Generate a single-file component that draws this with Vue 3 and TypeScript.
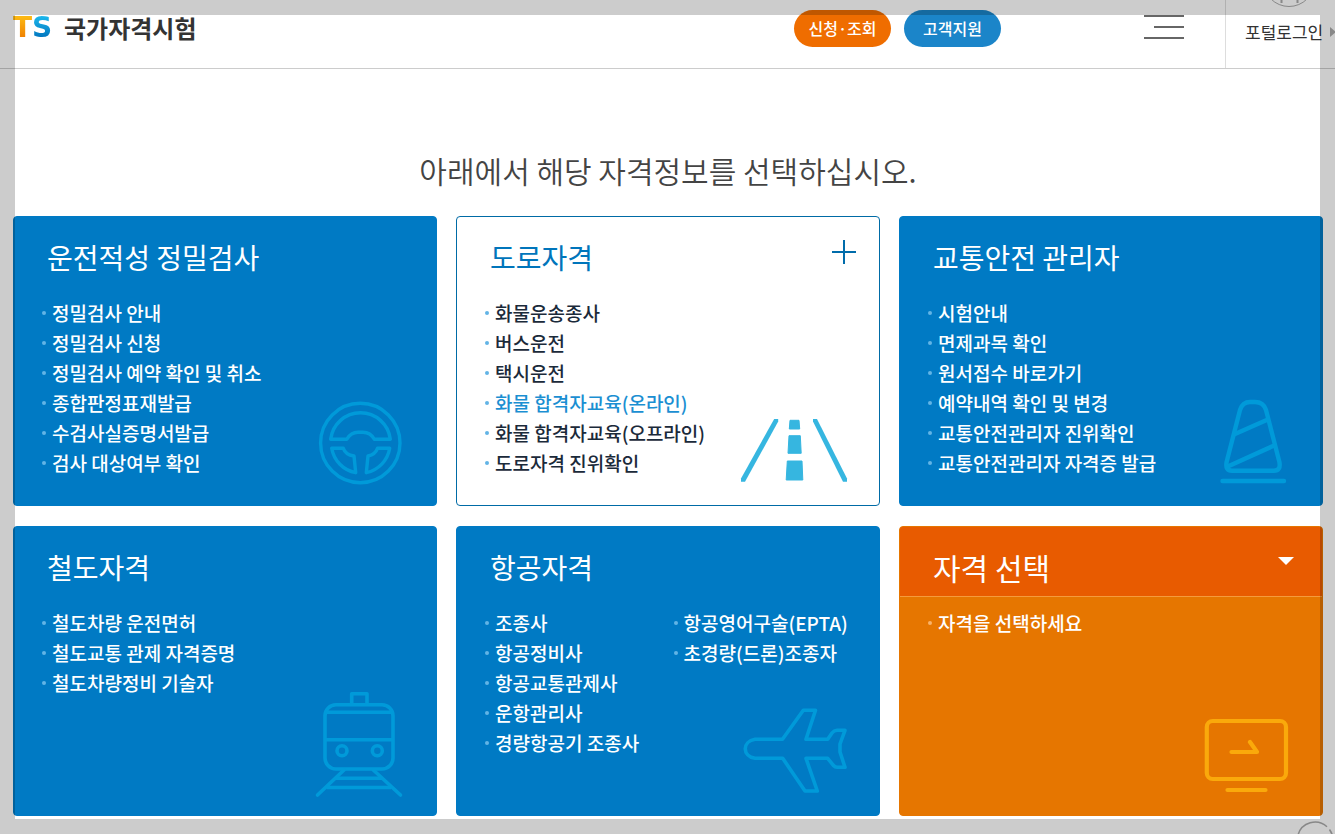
<script setup lang="ts">
import { computed, ref } from 'vue'

interface Card {
  title: string
  icon: 'wheel' | 'road' | 'cone' | 'train' | 'plane'
  columns: string[][]
  active?: boolean
  current?: string
}

const cards: Card[] = [
  {
    title: '운전적성 정밀검사',
    icon: 'wheel',
    columns: [['정밀검사 안내', '정밀검사 신청', '정밀검사 예약 확인 및 취소', '종합판정표재발급', '수검사실증명서발급', '검사 대상여부 확인']],
  },
  {
    title: '도로자격',
    icon: 'road',
    active: true,
    current: '화물 합격자교육(온라인)',
    columns: [['화물운송종사', '버스운전', '택시운전', '화물 합격자교육(온라인)', '화물 합격자교육(오프라인)', '도로자격 진위확인']],
  },
  {
    title: '교통안전 관리자',
    icon: 'cone',
    columns: [['시험안내', '면제과목 확인', '원서접수 바로가기', '예약내역 확인 및 변경', '교통안전관리자 진위확인', '교통안전관리자 자격증 발급']],
  },
  {
    title: '철도자격',
    icon: 'train',
    columns: [['철도차량 운전면허', '철도교통 관제 자격증명', '철도차량정비 기술자']],
  },
  {
    title: '항공자격',
    icon: 'plane',
    columns: [
      ['조종사', '항공정비사', '항공교통관제사', '운항관리사', '경량항공기 조종사'],
      ['항공영어구술(EPTA)', '초경량(드론)조종자'],
    ],
  },
]

const selected = ref('')
const selectedItems = computed(() => {
  const card = cards.find((c) => c.title === selected.value)
  return card ? card.columns.flat().slice(0, 6) : ['자격을 선택하세요']
})
</script>

<template>
  <div class="page">
    <header class="header">
      <div class="bar">
        <a class="logo" href="#">
          <span class="mark"><span class="mark-t">T</span><span class="mark-s">S</span></span>
          <span class="name">국가자격시험</span>
        </a>
        <nav class="nav">
          <a class="pill orange" href="#">신청·조회</a>
          <a class="pill blue" href="#">고객지원</a>
        </nav>
        <button class="burger" type="button" aria-label="메뉴">
          <svg width="40" height="24" viewBox="0 0 40 24" fill="#666">
            <rect width="40" height="2" />
            <rect x="10" y="11" width="30" height="2" />
            <rect y="22" width="40" height="2" />
          </svg>
        </button>
      </div>
      <a class="login" href="#">
        <svg class="login-icon" width="40" height="8" viewBox="0 0 40 8" fill="none" stroke="#aaa">
          <circle cx="20" cy="-19" r="25.5" />
          <path d="M12.5 0V3M28.5 0V3" stroke-width="2" />
        </svg>
        <span>포털로그인</span>
        <svg class="login-arrow" width="6" height="10" viewBox="0 0 6 10"><path d="M0 0L6 5L0 10Z" fill="#aaa" /></svg>
      </a>
    </header>

    <main class="main">
      <h1>아래에서 해당 자격정보를 선택하십시오.</h1>
      <div class="grid">
        <section v-for="card in cards" :key="card.title" class="card" :class="{ active: card.active }">
          <h2>{{ card.title }}</h2>
          <button v-if="card.active" class="plus" type="button" aria-label="더보기">
            <svg width="24" height="24" viewBox="0 0 24 24"><path d="M12 0V24M0 12H24" stroke="#006cab" stroke-width="2" /></svg>
          </button>
          <div class="lists">
            <ul v-for="(column, i) in card.columns" :key="i">
              <li v-for="item in column" :key="item">
                <a href="#" :class="{ current: item === card.current }">{{ item }}</a>
              </li>
            </ul>
          </div>
          <svg class="art" width="150" height="130" viewBox="0 0 150 130" fill="none" stroke="#009ad9" stroke-linejoin="round" aria-hidden="true">
            <g v-if="card.icon === 'wheel'" stroke-width="3.4">
              <circle cx="74.3" cy="68" r="39.7" />
              <path d="M44.7 64.3A30 30 0 0 1 104.3 64.3H88.3Q84.5 57.3 77 57.3H72Q65 57.3 60.7 64.3Z" />
              <path d="M45.7 73.3H57.3Q59.5 80 68 81L69.7 97.7A30 30 0 0 1 45.7 73.3Z" />
              <path d="M103.7 73.3H91.5Q89.5 79.5 82 81L80.3 97.7A30 30 0 0 0 103.7 73.3Z" />
            </g>
            <g v-else-if="card.icon === 'road'" stroke="none" fill="#36b6e0">
              <path d="M45.2 44H49.2V46.6L16 106.7H12V103.4Z" />
              <path d="M84 44H88L118 103.4V106.7H114L84 46.6Z" />
              <path d="M61 45.3H70L70.7 54H60.3ZM60 60.7H71.3L72.2 78.3H59ZM58.3 86H73L73.8 105H57.2Z" stroke="#36b6e0" stroke-width="1" />
            </g>
            <g v-else-if="card.icon === 'cone'" stroke-width="4.4" stroke-linecap="round">
              <path d="M68 35Q70.5 27 78 27H83Q91.5 27 94 35L107.4 87Q109 95.7 102 95.7H60Q53 95.7 54.6 87Z" />
              <path d="M63 59L95.3 44.8M56.3 91.3L102 70.6M50.5 106H112" />
            </g>
            <g v-else-if="card.icon === 'train'" stroke-width="3.6">
              <rect x="39" y="19.7" width="68" height="64.3" rx="11" />
              <path d="M39 27.3H107M39 54.7H107M65.7 19.7V8.8H81V19.7" />
              <circle cx="56" cy="65.7" r="5" />
              <circle cx="91.3" cy="65.7" r="5" />
              <path d="M58 85L31.5 110M87.3 85L114.5 110" stroke-linecap="round" />
              <path d="M50 93.3H96M40.5 102.5H105" />
            </g>
            <path
              v-else
              stroke-width="3.6"
              d="M26 54.3H53.5L74.3 25.2H86.5L77 54.3H98.7L103 48Q105 45.5 108 45.3H116L111 59V67L116 82.3H108Q106 82.3 104.5 80.5L98.7 73.3H77L88.3 106H76L53.7 73.3H26C13 71 13 56.5 26 54.3Z"
            />
          </svg>
        </section>

        <section class="card picker">
          <div class="picker-head">
            <select v-model="selected" aria-label="자격 선택">
              <option value="">자격 선택</option>
              <option v-for="card in cards" :key="card.title" :value="card.title">{{ card.title }}</option>
            </select>
            <svg class="caret" width="16" height="8" viewBox="0 0 16 8"><path d="M0 0H16L8 8Z" fill="#fff" /></svg>
          </div>
          <div class="lists">
            <ul>
              <li v-for="item in selectedItems" :key="item"><a href="#">{{ item }}</a></li>
            </ul>
          </div>
          <svg class="art" width="150" height="130" viewBox="0 0 150 130" fill="none" stroke="#faa90b" stroke-width="4.2" stroke-linecap="round" stroke-linejoin="round" aria-hidden="true">
            <rect x="34.8" y="36" width="79.2" height="58" rx="6" />
            <path d="M59.5 67H85L78 57M55.5 105H93.5" />
          </svg>
        </section>
      </div>
    </main>

    <div class="frame"></div>
    <button class="to-top" type="button" aria-label="위로">
      <svg width="38" height="38" viewBox="0 0 38 38" fill="none" stroke="#888" stroke-width="1.5">
        <path d="M33.5 9.5A17.8 17.8 0 1 1 31 6.7" />
      </svg>
    </button>
  </div>
</template>

<style>
body {
  margin: 0;
  background: #fff;
}
</style>

<style scoped>
.page {
  position: relative;
  box-sizing: border-box;
  min-height: 100vh;
  overflow: hidden;
  font-family: 'Noto Sans CJK KR', 'Noto Sans', sans-serif;
  color: #333;
}
a {
  color: inherit;
  text-decoration: none;
}
button {
  padding: 0;
  border: 0;
  background: none;
  cursor: pointer;
}
svg {
  display: block;
}
.header {
  display: flex;
  height: 68px;
  border-bottom: 1px solid #ccc;
}
.bar {
  flex: 1;
  display: flex;
  align-items: center;
  padding: 0 41px 12px 13px;
}
.logo {
  display: flex;
  align-items: center;
  gap: 8px;
  margin-right: auto;
}
.mark {
  display: flex;
  width: 43px;
  font: bold 28px/36px 'DejaVu Sans', sans-serif;
}
.mark-t,
.mark-s {
  color: transparent;
  background-clip: text;
  -webkit-background-clip: text;
}
.mark-t {
  background-image: linear-gradient(#fcb813 20%, #ef7d00 80%);
}
.mark-s {
  background-image: linear-gradient(#1ab4ea 20%, #0072bc 80%);
}
.name {
  font-size: 24px;
  line-height: 36px;
  font-weight: 700;
}
.nav {
  display: flex;
  gap: 13px;
}
.pill {
  width: 97px;
  border-radius: 19px;
  color: #fff;
  font-size: 16px;
  line-height: 37px;
  font-weight: 500;
  text-align: center;
}
.orange {
  background: #ef6d00;
}
.blue {
  background: #1b85c9;
}
.burger {
  margin-left: 143px;
  padding-bottom: 2px;
}
.login {
  position: relative;
  display: flex;
  align-items: center;
  gap: 7px;
  box-sizing: border-box;
  width: 110px;
  padding: 0 0 4px 19px;
  border-left: 1px solid #ddd;
  font-size: 17px;
  line-height: 30px;
  white-space: nowrap;
}
.login-icon {
  position: absolute;
  top: 0;
  right: 26px;
}
.login-arrow {
  flex: none;
}
.main {
  padding: 79px 12px 18px 13px;
}
h1 {
  margin: 0 0 24px;
  color: #444;
  font-size: 30px;
  line-height: 44px;
  font-weight: 350;
  text-align: center;
}
.grid {
  display: grid;
  grid-template-columns: repeat(3, 1fr);
  gap: 20px 19px;
}
.card {
  position: relative;
  box-sizing: border-box;
  min-height: 290px;
  padding-top: 20px;
  border: 1px solid #007ac4;
  border-radius: 4px;
  background: #007ac4;
  color: #fff;
}
.active {
  border-color: #006ba6;
  background: #fff;
  color: #1b2a3a;
}
h2 {
  margin: 0 0 20px;
  padding-left: 33px;
  font-size: 28px;
  line-height: 41px;
  font-weight: 400;
}
.active h2 {
  color: #0075bb;
}
.plus {
  position: absolute;
  top: 23px;
  right: 23px;
}
.lists {
  display: grid;
  grid-auto-flow: column;
  grid-auto-columns: 1fr;
  padding: 0 17px 0 28px;
}
ul {
  margin: 0;
  padding: 0;
  list-style: none;
}
li {
  display: flex;
  align-items: center;
  gap: 6px;
  font-size: 19px;
  line-height: 30px;
  font-weight: 500;
  white-space: nowrap;
}
li::before {
  content: '';
  width: 4px;
  height: 4px;
  border-radius: 50%;
  background: #62b4e6;
}
.current {
  color: #1b8fd2;
}
.art {
  position: absolute;
  right: 0;
  bottom: 0;
  pointer-events: none;
}
.picker {
  padding-top: 0;
  border-color: #e67600;
  background: #e67600;
}
.picker-head {
  position: relative;
  margin-bottom: 11px;
  border-bottom: 1px solid #f59a3c;
  border-radius: 3px 3px 0 0;
  background: #e85b00;
}
.picker select {
  display: block;
  box-sizing: border-box;
  width: 100%;
  height: 69px;
  padding: 10px 60px 0 33px;
  border: 0;
  border-radius: 0;
  outline: 0;
  appearance: none;
  background: none;
  color: #fff;
  font: 400 30px/44px 'Noto Sans CJK KR', sans-serif;
}
.picker option {
  color: #333;
  font-size: 19px;
}
.caret {
  position: absolute;
  top: 30px;
  right: 28px;
  pointer-events: none;
}
.picker li::before {
  background: #f9b36a;
}
.frame {
  position: fixed;
  inset: 0;
  border: 15px solid rgba(0, 0, 0, 0.2);
  pointer-events: none;
}
.to-top {
  position: fixed;
  right: 1px;
  bottom: -24px;
}
</style>
